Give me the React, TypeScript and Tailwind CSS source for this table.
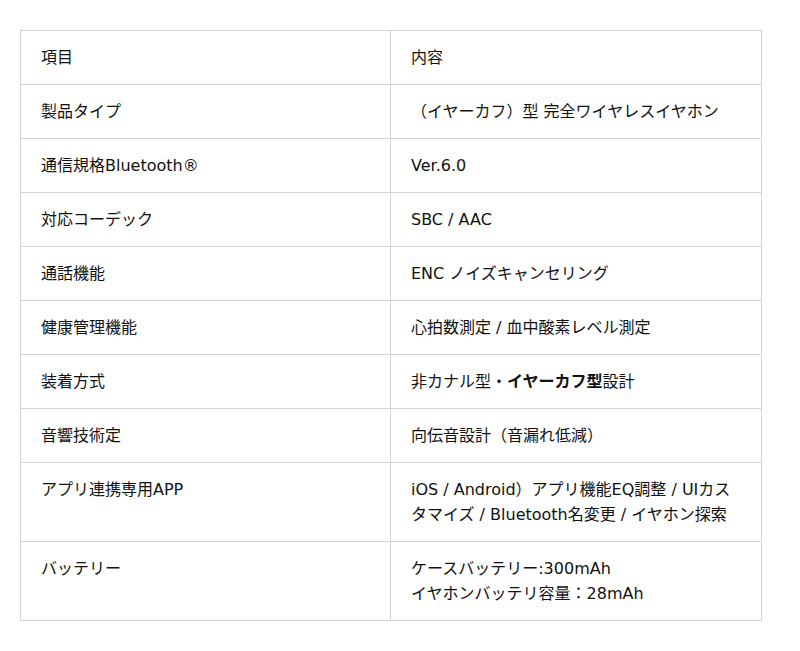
import React from "react";

const rows: [string, React.ReactNode][] = [
  ["項目", "内容"],
  ["製品タイプ", "（イヤーカフ）型 完全ワイヤレスイヤホン"],
  ["通信規格Bluetooth®", "Ver.6.0"],
  ["対応コーデック", "SBC / AAC"],
  ["通話機能", "ENC ノイズキャンセリング"],
  ["健康管理機能", "心拍数測定 / 血中酸素レベル測定"],
  [
    "装着方式",
    <>
      非カナル型・<b className="font-bold">イヤーカフ型</b>設計
    </>,
  ],
  ["音響技術定", "向伝音設計（音漏れ低減）"],
  ["アプリ連携専用APP", "iOS / Android）アプリ機能EQ調整 / UIカスタマイズ / Bluetooth名変更 / イヤホン探索"],
  [
    "バッテリー",
    <>
      ケースバッテリー:300mAh
      <br />
      イヤホンバッテリ容量：28mAh
    </>,
  ],
];

export default function App() {
  return (
    <div
      className="bg-white w-[800px] h-[651px] pt-[30px] pl-[20px]"
      style={{ fontFamily: '"DejaVu Sans", "Noto Sans CJK JP", sans-serif' }}
    >
      <table className="w-[742px] border-collapse text-[16px] leading-[25px] text-[#111]">
        <tbody>
          {rows.map(([a, b], i) => (
            <tr key={i}>
              <td className="w-[370px] align-top border border-[#d4d4d4] px-[20px] pt-[14px] pb-[14px]">{a}</td>
              <td className="align-top border border-[#d4d4d4] px-[20px] pt-[14px] pb-[14px]">{b}</td>
            </tr>
          ))}
        </tbody>
      </table>
    </div>
  );
}
